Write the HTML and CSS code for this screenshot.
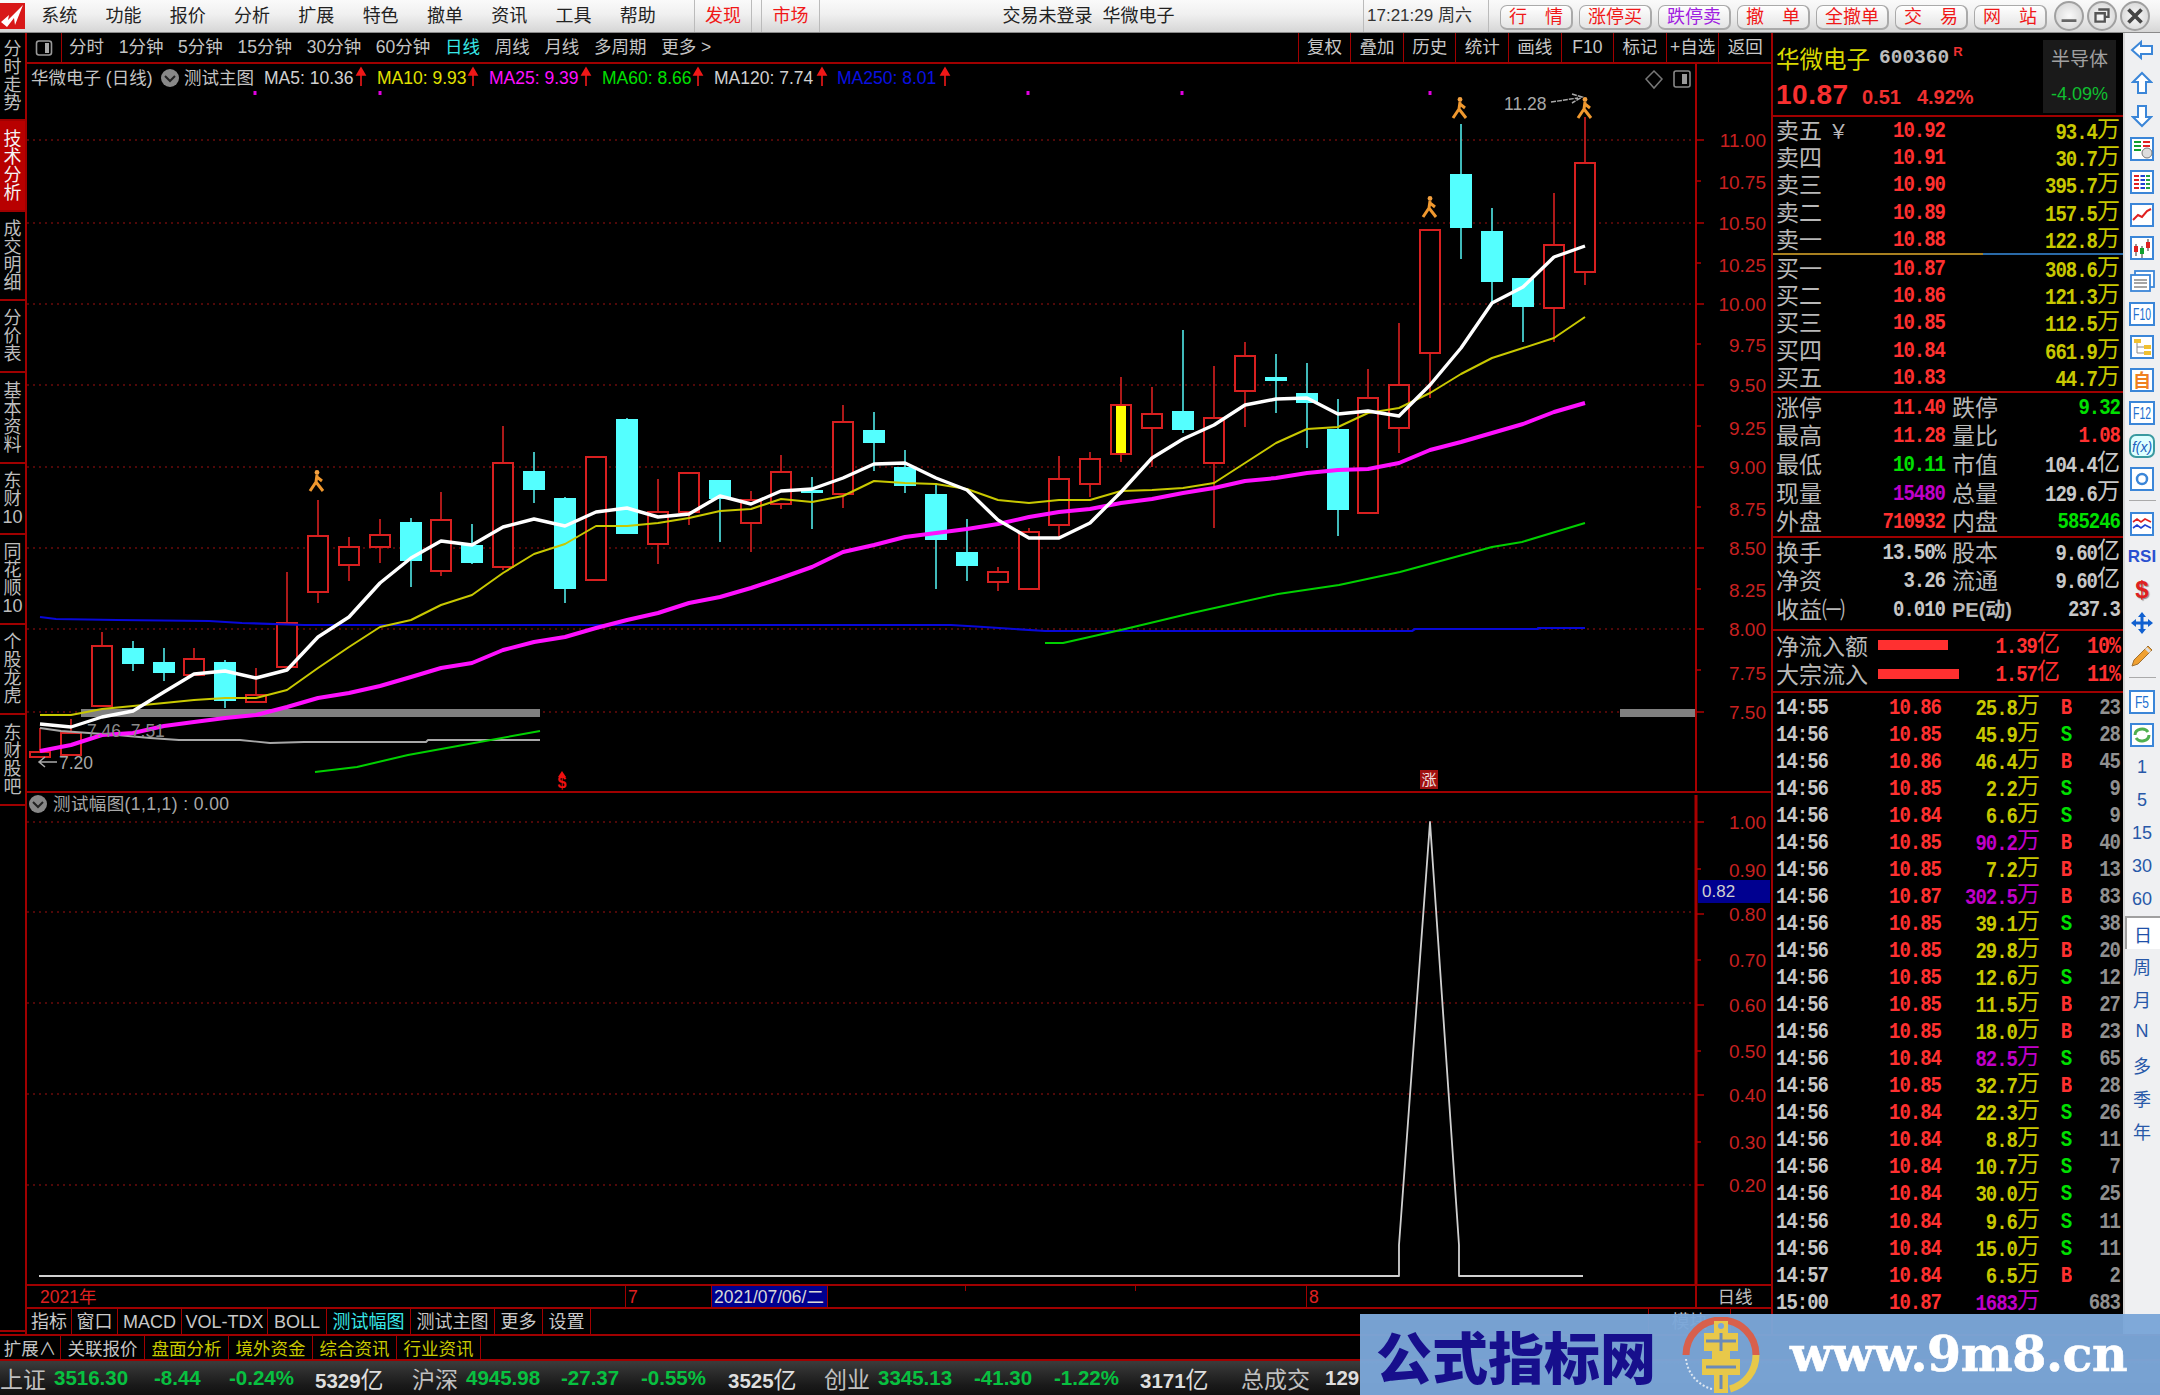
FILE: index.html
```html
<!DOCTYPE html>
<html lang="zh-CN">
<head>
<meta charset="utf-8">
<title>华微电子 600360</title>
<link rel="stylesheet" href="styles.css">
</head>
<body>
<div class="app">
  <header class="topbar">
    <div class="logo"><svg width="25" height="26" viewBox="0 0 25 26"><rect width="25" height="26" fill="#d81818"/><path d="M1 19 L9 12 L8 17 L23 2 L15 22 L14 15 L7 24 Z" fill="#fff"/></svg></div>
    <nav class="menu"><a>系统</a><a>功能</a><a>报价</a><a>分析</a><a>扩展</a><a>特色</a><a>撤单</a><a>资讯</a><a>工具</a><a>帮助</a></nav>
    <a class="hot hot-a">发现</a><a class="hot hot-b">市场</a>
    <div class="title">交易未登录&nbsp;&nbsp;华微电子</div>
    <div class="clock">17:21:29 周六</div>
    <div class="btns"><a class="btn">行&emsp;情</a><a class="btn">涨停买</a><a class="btn purple">跌停卖</a><a class="btn">撤&emsp;单</a><a class="btn">全撤单</a><a class="btn">交&emsp;易</a><a class="btn">网&emsp;站</a></div>
    <div class="winbtns">
      <span class="win"><svg width="28" height="28" viewBox="0 0 28 28"><path d="M6 19H22" stroke="#666" stroke-width="3"/></svg></span>
      <span class="win"><svg width="28" height="28" viewBox="0 0 28 28"><path d="M10 7H21V15H18M7 11H17V20H7Z" fill="none" stroke="#555" stroke-width="2.5"/></svg></span>
      <span class="win"><svg width="28" height="28" viewBox="0 0 28 28"><path d="M7 7L21 21M21 7L7 21" stroke="#444" stroke-width="4"/></svg></span>
    </div>
  </header>

  <div class="work">
    <aside class="sidetabs">
      <a class="stab h88">分<br>时<br>走<br>势</a>
      <a class="stab h91 on">技<br>术<br>分<br>析</a>
      <a class="stab h89">成<br>交<br>明<br>细</a>
      <a class="stab h72">分<br>价<br>表</a>
      <a class="stab h91">基<br>本<br>资<br>料</a>
      <a class="stab h71">东<br>财<br>10</a>
      <a class="stab h90">同<br>花<br>顺<br>10</a>
      <a class="stab h90">个<br>股<br>龙<br>虎</a>
      <a class="stab h91">东<br>财<br>股<br>吧</a>
      <div class="sidefill"></div>
    </aside>

    <main class="center">
      <div class="toolbar">
        <span class="tcell"><svg width="18" height="18" viewBox="0 0 18 18"><rect x="1.5" y="2" width="15" height="14" rx="2.5" fill="none" stroke="#999" stroke-width="1.6"/><rect x="10" y="4" width="4" height="10" fill="#aaa"/></svg></span>
        <div class="periods"><a>分时</a><a>1分钟</a><a>5分钟</a><a>15分钟</a><a>30分钟</a><a>60分钟</a><a class="cy">日线</a><a>周线</a><a>月线</a><a>多周期</a><a>更多 &gt;</a></div>
        <div class="tools-r"><a>复权</a><a>叠加</a><a>历史</a><a>统计</a><a>画线</a><a>F10</a><a>标记</a><a>+自选</a><a>返回</a></div>
      </div>

      <svg class="pane-main" width="1744" height="727" viewBox="27 64 1744 727">
        <defs>
          <symbol id="walker" viewBox="0 0 18 22"><circle cx="9" cy="2.5" r="2.4" fill="#f2a040"/><path d="M9 5L8 12L2 21M8 12L15 21M9 7L14 11" fill="none" stroke="#f0982e" stroke-width="3"/></symbol>
        </defs>
        <path class="grid" d="M27 140H1696M27 223H1696M27 304H1696M27 385H1696M27 467H1696M27 548H1696M27 629H1696M27 712H1696"/>
        <path class="dots" d="M255 91v4M380 91v4M1028 91v4M1182 91v4M1430 91v4"/>
        <rect class="band" x="81" y="709" width="459" height="8"/>
        <rect class="band" x="1620" y="709" width="76" height="8"/>

        <path class="wick-r" d="M40 728V757M71 719V755M102 632V706M194 648V675M256 668V703M287 572V667M318 500V603M349 537V581M380 519V563M441 492V576M503 426V570M658 479V564M689 472V525M751 491V552M781 455V509M843 405V508M998 567V591M1029 528V589M1059 456V537M1090 452V497M1121 377V462M1152 387V467M1214 366V528M1245 342V427M1368 369V513M1399 323V453M1430 230V398M1554 193V342M1585 117V285"/>
        <path class="wick-c" d="M133 641V671M164 648V681M225 660V708M411 518V587M472 524V564M534 452V503M565 497V603M627 418V534M720 481V542M812 477V529M874 412V471M905 450V493M936 483V589M967 519V581M1183 330V433M1276 354V413M1307 363V448M1338 399V536M1461 124V259M1492 208V305M1523 278V342"/>

        <g class="up">
          <rect x="30" y="752" width="20" height="5"/><rect x="61" y="733" width="20" height="22"/><rect x="92" y="646" width="20" height="60"/>
          <rect x="184" y="659" width="20" height="16"/><rect x="246" y="695" width="20" height="7"/><rect x="277" y="623" width="20" height="44"/>
          <rect x="308" y="536" width="20" height="56"/><rect x="339" y="547" width="20" height="18"/><rect x="370" y="535" width="20" height="12"/>
          <rect x="431" y="520" width="20" height="51"/><rect x="493" y="463" width="20" height="104"/><rect x="586" y="457" width="20" height="123"/>
          <rect x="648" y="512" width="20" height="32"/><rect x="679" y="473" width="20" height="39"/><rect x="741" y="500" width="20" height="23"/>
          <rect x="771" y="472" width="20" height="32"/><rect x="833" y="422" width="20" height="72"/><rect x="988" y="572" width="20" height="10"/>
          <rect x="1019" y="532" width="20" height="57"/><rect x="1049" y="479" width="20" height="46"/><rect x="1080" y="459" width="20" height="25"/>
          <rect x="1111" y="405" width="20" height="49"/><rect x="1142" y="414" width="20" height="14"/><rect x="1204" y="418" width="20" height="45"/>
          <rect x="1235" y="356" width="20" height="35"/><rect x="1358" y="398" width="20" height="115"/><rect x="1389" y="385" width="20" height="43"/>
          <rect x="1420" y="230" width="20" height="123"/><rect x="1544" y="245" width="20" height="63"/><rect x="1575" y="163" width="20" height="109"/>
        </g>
        <rect class="up-y" x="1116" y="406" width="10" height="47"/>
        <g class="down">
          <rect x="122" y="648" width="22" height="16"/><rect x="153" y="662" width="22" height="11"/><rect x="214" y="662" width="22" height="39"/>
          <rect x="400" y="522" width="22" height="39"/><rect x="461" y="545" width="22" height="18"/><rect x="523" y="471" width="22" height="19"/>
          <rect x="554" y="498" width="22" height="91"/><rect x="616" y="419" width="22" height="115"/><rect x="709" y="480" width="22" height="19"/>
          <rect x="801" y="490" width="22" height="3"/><rect x="863" y="430" width="22" height="13"/><rect x="894" y="467" width="22" height="19"/>
          <rect x="925" y="494" width="22" height="46"/><rect x="956" y="552" width="22" height="14"/><rect x="1172" y="411" width="22" height="19"/>
          <rect x="1265" y="377" width="22" height="4"/><rect x="1296" y="393" width="22" height="10"/><rect x="1327" y="429" width="22" height="81"/>
          <rect x="1450" y="174" width="22" height="54"/><rect x="1481" y="231" width="22" height="51"/><rect x="1512" y="278" width="22" height="29"/>
        </g>

        <polyline class="l-blue" points="40,617 56,619 117,620 209,621 242,623 304,625 951,625 984,627 1045,631 1412,631 1415,629 1538,629 1538,628 1585,628"/>
        <polyline class="l-gray" points="40,728 61,731 117,735 150,738 179,740 240,740 270,743 304,742 426,742 428,740 540,740"/>
        <polyline class="l-green" points="315,772 357,767 408,755 540,731"/>
        <polyline class="l-green" points="1045,643 1063,643 1125,629 1192,613 1278,594 1339,585 1400,572 1492,547 1522,542 1585,523"/>
        <polyline class="l-mag" points="40,751 71,745 102,735 133,733 164,726 194,722 225,718 256,715 287,707 318,698 349,693 380,686 411,677 441,668 472,663 503,650 534,642 565,637 596,628 627,620 658,613 689,603 720,597 751,588 781,578 812,567 843,552 874,545 905,537 936,533 967,529 998,524 1029,517 1059,512 1090,509 1121,503 1152,499 1183,493 1214,488 1245,481 1276,478 1307,473 1338,470 1368,469 1399,463 1430,450 1461,442 1492,433 1523,424 1554,412 1585,403"/>
        <polyline class="l-yel" points="40,715 71,715 102,709 133,706 164,703 194,700 225,698 256,698 287,690 318,668 349,647 380,627 411,620 441,605 472,595 503,573 534,554 565,544 596,526 627,526 658,523 689,518 720,511 751,509 781,499 812,502 843,496 874,481 905,483 936,484 967,489 998,500 1029,503 1059,500 1090,500 1121,491 1152,490 1183,488 1214,483 1245,463 1276,443 1307,429 1338,427 1368,413 1399,408 1430,393 1461,374 1492,358 1523,348 1554,338 1585,317"/>
        <polyline class="l-white" points="40,724 71,727 102,717 133,711 164,692 194,674 225,671 256,678 287,670 318,637 349,617 380,583 411,558 441,541 472,545 503,527 534,519 565,526 596,512 627,508 658,517 689,514 720,496 751,504 781,491 812,489 843,478 874,464 905,463 936,478 967,490 998,520 1029,538 1059,538 1090,523 1121,492 1152,458 1183,439 1214,425 1245,405 1276,399 1307,398 1338,414 1368,411 1399,416 1430,385 1461,348 1492,303 1523,287 1554,257 1585,246"/>

        <use href="#walker" x="308" y="470" width="18" height="22"/>
        <use href="#walker" x="1421" y="196" width="18" height="22"/>
        <use href="#walker" x="1451" y="97" width="18" height="22"/>
        <use href="#walker" x="1576" y="97" width="18" height="22"/>

        <text class="t-hd" x="31" y="84">华微电子 (日线)</text>
        <g><circle cx="170" cy="78" r="9" fill="#888"/><path d="M165 76l5 5 5-5" fill="none" stroke="#222" stroke-width="2"/></g>
        <text class="t-hd" x="184" y="84">测试主图</text>
        <text class="t-hd c-w" x="264" y="84">MA5: 10.36</text><path class="arr" d="M361 86V70M357 75L361 68L365 75Z"/>
        <text class="t-hd c-y" x="377" y="84">MA10: 9.93</text><path class="arr" d="M473 86V70M469 75L473 68L477 75Z"/>
        <text class="t-hd c-m" x="489" y="84">MA25: 9.39</text><path class="arr" d="M586 86V70M582 75L586 68L590 75Z"/>
        <text class="t-hd c-g" x="602" y="84">MA60: 8.66</text><path class="arr" d="M698 86V70M694 75L698 68L702 75Z"/>
        <text class="t-hd c-w" x="714" y="84">MA120: 7.74</text><path class="arr" d="M822 86V70M818 75L822 68L826 75Z"/>
        <text class="t-hd c-b" x="837" y="84">MA250: 8.01</text><path class="arr" d="M945 86V70M941 75L945 68L949 75Z"/>
        <path d="M1654 71L1662 79L1654 88L1646 79Z" fill="none" stroke="#777" stroke-width="1.5"/>
        <rect x="1674" y="71" width="16" height="16" rx="2" fill="none" stroke="#888" stroke-width="1.6"/><rect x="1682" y="74" width="5" height="10" fill="#999"/>

        <text class="t-anno" x="1504" y="110">11.28</text>
        <path d="M1551 102L1578 98M1572 94L1582 97L1572 103" fill="none" stroke="#aaa" stroke-width="1.5" stroke-dasharray="5 1"/>
        <text class="t-anno t-dim" x="87" y="737">7.46&nbsp;&nbsp;7.51</text>
        <text class="t-anno" x="59" y="769">7.20</text>
        <path d="M57 762H40M45 757L39 762L45 767" fill="none" stroke="#aaa" stroke-width="1.5"/>

        <path d="M562 771L566 777H558Z" fill="#f01010"/>
        <text class="t-dollar" x="562" y="788">$</text>
        <rect x="1420" y="770" width="18" height="19" fill="#a01010"/>
        <text class="t-zhang" x="1429" y="785">涨</text>

        <path class="axis" d="M1696 64V791"/>
        <path class="axtick" d="M1696 140H1704M1696 181H1701M1696 223H1704M1696 263H1701M1696 304H1704M1696 344H1701M1696 385H1704M1696 426H1701M1696 467H1704M1696 507H1701M1696 548H1704M1696 589H1701M1696 629H1704M1696 670H1701M1696 712H1704"/>
        <g class="ax">
          <text x="1766" y="147">11.00</text><text x="1766" y="189">10.75</text><text x="1766" y="230">10.50</text><text x="1766" y="272">10.25</text><text x="1766" y="311">10.00</text><text x="1766" y="352">9.75</text><text x="1766" y="392">9.50</text><text x="1766" y="435">9.25</text><text x="1766" y="474">9.00</text><text x="1766" y="516">8.75</text><text x="1766" y="555">8.50</text><text x="1766" y="597">8.25</text><text x="1766" y="636">8.00</text><text x="1766" y="680">7.75</text><text x="1766" y="719">7.50</text>
        </g>
      </svg>

      <svg class="pane-sub" width="1744" height="491" viewBox="27 793 1744 491">
        <path class="grid" d="M27 822H1696M27 912H1696M27 1003H1696M27 1094H1696M27 1185H1696"/>
        <g><circle cx="38" cy="804" r="9" fill="#888"/><path d="M33 802l5 5 5-5" fill="none" stroke="#222" stroke-width="2"/></g>
        <text class="t-hd c-s" x="53" y="810">测试幅图(1,1,1) : 0.00</text>
        <polyline class="l-spike" points="39,1276 1399,1276 1399,1245 1430,822 1459,1245 1459,1276 1583,1276"/>
        <path class="axis thick" d="M1696 795V1284"/>
        <path class="axtick" d="M1696 822H1704M1696 869H1701M1696 914H1704M1696 960H1701M1696 1005H1704M1696 1051H1701M1696 1095H1704M1696 1142H1701M1696 1185H1704"/>
        <g class="ax">
          <text x="1766" y="829">1.00</text><text x="1766" y="877">0.90</text><text x="1766" y="921">0.80</text><text x="1766" y="967">0.70</text><text x="1766" y="1012">0.60</text><text x="1766" y="1058">0.50</text><text x="1766" y="1102">0.40</text><text x="1766" y="1149">0.30</text><text x="1766" y="1192">0.20</text>
        </g>
        <rect x="1698" y="880" width="72" height="23" fill="#000090"/>
        <text class="t-val" x="1702" y="897">0.82</text>
      </svg>

      <div class="datebar">
        <span class="d1">2021年</span><span class="d2">7</span><span class="d3">2021/07/06/二</span><span class="d4"></span><span class="d5">8</span><span class="d6">日线</span>
        <i class="tick t1"></i><i class="tick t2"></i>
      </div>

      <div class="subtabs"><a class="c45">指标</a><a class="c46">窗口</a><a class="c64">MACD</a><a class="c86">VOL-TDX</a><a class="c59">BOLL</a><a class="c84 cy">测试幅图</a><a class="c84">测试主图</a><a class="c48">更多</a><a class="c48">设置</a><a class="ghost">模块</a></div>
    </main>

    <section class="quote">
      <div class="q-head">
        <div class="q-id">
          <div class="q-name"><span class="nm">华微电子</span><span class="code">600360</span><sup>R</sup></div>
          <div class="q-price"><b>10.87</b><span>0.51</span><span class="pct">4.92%</span></div>
        </div>
        <div class="sector"><span>半导体</span><em>-4.09%</em></div>
      </div>
      <div class="book">
        <div class="o"><span>卖五 <small>￥</small></span><b class="r">10.92</b><b class="y">93.4<i>万</i></b></div>
        <div class="o"><span>卖四</span><b class="r">10.91</b><b class="y">30.7<i>万</i></b></div>
        <div class="o"><span>卖三</span><b class="r">10.90</b><b class="y">395.7<i>万</i></b></div>
        <div class="o"><span>卖二</span><b class="r">10.89</b><b class="y">157.5<i>万</i></b></div>
        <div class="o"><span>卖一</span><b class="r">10.88</b><b class="y">122.8<i>万</i></b></div>
      </div>
      <div class="split"></div>
      <div class="book">
        <div class="o"><span>买一</span><b class="r">10.87</b><b class="y">308.6<i>万</i></b></div>
        <div class="o"><span>买二</span><b class="r">10.86</b><b class="y">121.3<i>万</i></b></div>
        <div class="o"><span>买三</span><b class="r">10.85</b><b class="y">112.5<i>万</i></b></div>
        <div class="o"><span>买四</span><b class="r">10.84</b><b class="y">661.9<i>万</i></b></div>
        <div class="o"><span>买五</span><b class="r">10.83</b><b class="y">44.7<i>万</i></b></div>
      </div>
      <div class="rule"></div>
      <div class="stats">
        <div class="s"><span>涨停</span><b class="r">11.40</b><span class="l2">跌停</span><b class="g">9.32</b></div>
        <div class="s"><span>最高</span><b class="r">11.28</b><span class="l2">量比</span><b class="r">1.08</b></div>
        <div class="s"><span>最低</span><b class="g">10.11</b><span class="l2">市值</span><b class="w">104.4<i>亿</i></b></div>
        <div class="s"><span>现量</span><b class="p">15480</b><span class="l2">总量</span><b class="w">129.6<i>万</i></b></div>
        <div class="s"><span>外盘</span><b class="r">710932</b><span class="l2">内盘</span><b class="g">585246</b></div>
      </div>
      <div class="rule"></div>
      <div class="stats fin">
        <div class="s"><span>换手</span><b class="w">13.50%</b><span class="l2">股本</span><b class="w">9.60<i>亿</i></b></div>
        <div class="s"><span>净资</span><b class="w">3.26</b><span class="l2">流通</span><b class="w">9.60<i>亿</i></b></div>
        <div class="s"><span>收益㈠</span><b class="w">0.010</b><span class="l2 pe">PE(动)</span><b class="w">237.3</b></div>
      </div>
      <div class="rule"></div>
      <div class="flows">
        <div class="f"><span>净流入额</span><u style="width:70px"></u><b class="r">1.39<i>亿</i></b><b class="r pc">10%</b></div>
        <div class="f"><span>大宗流入</span><u style="width:81px"></u><b class="r">1.57<i>亿</i></b><b class="r pc">11%</b></div>
      </div>
      <div class="rule"></div>
      <div class="ticks">
        <div class="k"><b>14:55</b><b class="r">10.86</b><b class="y">25.8<i>万</i></b><b class="r bs">B</b><b class="c">23</b></div>
        <div class="k"><b>14:56</b><b class="r">10.85</b><b class="y">45.9<i>万</i></b><b class="g bs">S</b><b class="c">28</b></div>
        <div class="k"><b>14:56</b><b class="r">10.86</b><b class="y">46.4<i>万</i></b><b class="r bs">B</b><b class="c">45</b></div>
        <div class="k"><b>14:56</b><b class="r">10.85</b><b class="y">2.2<i>万</i></b><b class="g bs">S</b><b class="c">9</b></div>
        <div class="k"><b>14:56</b><b class="r">10.84</b><b class="y">6.6<i>万</i></b><b class="g bs">S</b><b class="c">9</b></div>
        <div class="k"><b>14:56</b><b class="r">10.85</b><b class="p">90.2<i>万</i></b><b class="r bs">B</b><b class="c">40</b></div>
        <div class="k"><b>14:56</b><b class="r">10.85</b><b class="y">7.2<i>万</i></b><b class="r bs">B</b><b class="c">13</b></div>
        <div class="k"><b>14:56</b><b class="r">10.87</b><b class="p">302.5<i>万</i></b><b class="r bs">B</b><b class="c">83</b></div>
        <div class="k"><b>14:56</b><b class="r">10.85</b><b class="y">39.1<i>万</i></b><b class="g bs">S</b><b class="c">38</b></div>
        <div class="k"><b>14:56</b><b class="r">10.85</b><b class="y">29.8<i>万</i></b><b class="r bs">B</b><b class="c">20</b></div>
        <div class="k"><b>14:56</b><b class="r">10.85</b><b class="y">12.6<i>万</i></b><b class="g bs">S</b><b class="c">12</b></div>
        <div class="k"><b>14:56</b><b class="r">10.85</b><b class="y">11.5<i>万</i></b><b class="r bs">B</b><b class="c">27</b></div>
        <div class="k"><b>14:56</b><b class="r">10.85</b><b class="y">18.0<i>万</i></b><b class="r bs">B</b><b class="c">23</b></div>
        <div class="k"><b>14:56</b><b class="r">10.84</b><b class="p">82.5<i>万</i></b><b class="g bs">S</b><b class="c">65</b></div>
        <div class="k"><b>14:56</b><b class="r">10.85</b><b class="y">32.7<i>万</i></b><b class="r bs">B</b><b class="c">28</b></div>
        <div class="k"><b>14:56</b><b class="r">10.84</b><b class="y">22.3<i>万</i></b><b class="g bs">S</b><b class="c">26</b></div>
        <div class="k"><b>14:56</b><b class="r">10.84</b><b class="y">8.8<i>万</i></b><b class="g bs">S</b><b class="c">11</b></div>
        <div class="k"><b>14:56</b><b class="r">10.84</b><b class="y">10.7<i>万</i></b><b class="g bs">S</b><b class="c">7</b></div>
        <div class="k"><b>14:56</b><b class="r">10.84</b><b class="y">30.0<i>万</i></b><b class="g bs">S</b><b class="c">25</b></div>
        <div class="k"><b>14:56</b><b class="r">10.84</b><b class="y">9.6<i>万</i></b><b class="g bs">S</b><b class="c">11</b></div>
        <div class="k"><b>14:56</b><b class="r">10.84</b><b class="y">15.0<i>万</i></b><b class="g bs">S</b><b class="c">11</b></div>
        <div class="k"><b>14:57</b><b class="r">10.84</b><b class="y">6.5<i>万</i></b><b class="r bs">B</b><b class="c">2</b></div>
        <div class="k"><b>15:00</b><b class="r">10.87</b><b class="p">1683<i>万</i></b><b class="bs"></b><b class="c">683</b></div>
      </div>
    </section>

    <aside class="tools">
      <a class="ti"><svg width="24" height="22" viewBox="0 0 24 22"><path d="M2 11L11 3V7H22V15H11V19Z" fill="#fff" stroke="#3b86d8" stroke-width="2"/></svg></a>
      <a class="ti"><svg width="22" height="24" viewBox="0 0 22 24"><path d="M11 2L20 11H15V22H7V11H2Z" fill="#fff" stroke="#3b86d8" stroke-width="2"/></svg></a>
      <a class="ti"><svg width="22" height="24" viewBox="0 0 22 24"><path d="M11 22L20 13H15V2H7V13H2Z" fill="#fff" stroke="#3b86d8" stroke-width="2"/></svg></a>
      <a class="ti"><svg width="24" height="24" viewBox="0 0 24 24"><rect x="1" y="1" width="22" height="22" fill="#fff" stroke="#3b86d8" stroke-width="2"/><path d="M4 5H11M4 9H11M4 13H11" stroke="#10a030" stroke-width="2"/><path d="M13 5H20M13 9H20" stroke="#e02020" stroke-width="2"/><circle cx="17" cy="16" r="5" fill="#ddd" stroke="#777"/></svg></a>
      <a class="ti"><svg width="24" height="24" viewBox="0 0 24 24"><rect x="1" y="1" width="22" height="22" fill="#fff" stroke="#3b86d8" stroke-width="2"/><path d="M4 6H9M4 10H9M4 14H9M4 18H9" stroke="#e02020" stroke-width="2"/><path d="M10.500 6H15M10.500 10H15M10.500 14H15M10.500 18H15" stroke="#2040d0" stroke-width="2"/><path d="M16 6H20M16 10H20M16 14H20M16 18H20" stroke="#20a040" stroke-width="2"/></svg></a>
      <a class="ti"><svg width="24" height="24" viewBox="0 0 24 24"><rect x="1" y="1" width="22" height="22" fill="#fff" stroke="#3b86d8" stroke-width="2"/><path d="M3 17L8 12L12 14L17 8L21 6" fill="none" stroke="#e02020" stroke-width="2"/></svg></a>
      <a class="ti"><svg width="24" height="24" viewBox="0 0 24 24"><rect x="1" y="1" width="22" height="22" fill="#fff" stroke="#3b86d8" stroke-width="2"/><path d="M6 8V20M12 10V22M18 3V15" stroke="#555" stroke-width="1.2"/><rect x="4" y="10" width="4" height="6" fill="#e02020"/><rect x="10" y="12" width="4" height="6" fill="#10a030"/><rect x="16" y="6" width="4" height="6" fill="#e02020"/></svg></a>
      <a class="ti"><svg width="26" height="24" viewBox="0 0 26 24"><rect x="6" y="2" width="19" height="16" fill="#fff" stroke="#3b86d8" stroke-width="1.8"/><rect x="2" y="6" width="19" height="16" fill="#fff" stroke="#3b86d8" stroke-width="1.8"/><path d="M5 11H18M5 14H18M5 18H18" stroke="#888" stroke-width="1.6"/></svg></a>
      <a class="ti"><svg width="26" height="24" viewBox="0 0 26 24"><rect x="1" y="1" width="24" height="22" fill="#fff" stroke="#3b86d8" stroke-width="2"/><text class="ft" x="4" y="18" textLength="18" lengthAdjust="spacingAndGlyphs">F10</text></svg></a>
      <a class="ti"><svg width="24" height="24" viewBox="0 0 24 24"><rect x="1" y="1" width="22" height="22" fill="#fff" stroke="#3b86d8" stroke-width="2"/><rect x="4" y="4" width="7" height="4" fill="#f0c030"/><rect x="14" y="10" width="7" height="4" fill="#f0c030"/><rect x="14" y="16" width="7" height="4" fill="#f0c030"/><path d="M7 8V18H14M7 12H14" fill="none" stroke="#888"/></svg></a>
      <a class="ti"><svg width="24" height="24" viewBox="0 0 24 24"><rect x="1" y="1" width="22" height="22" fill="#fff" stroke="#3b86d8" stroke-width="2"/><text class="fz" x="12" y="19">自</text></svg></a>
      <a class="ti"><svg width="26" height="24" viewBox="0 0 26 24"><rect x="1" y="1" width="24" height="22" fill="#fff" stroke="#3b86d8" stroke-width="2"/><text class="ft" x="4" y="18" textLength="18" lengthAdjust="spacingAndGlyphs">F12</text></svg></a>
      <a class="ti"><svg width="26" height="24" viewBox="0 0 26 24"><rect x="1" y="1" width="24" height="22" rx="6" fill="#dff" stroke="#3a9aa0" stroke-width="2"/><text class="fx" x="13" y="18">f(x)</text></svg></a>
      <a class="ti"><svg width="24" height="24" viewBox="0 0 24 24"><rect x="1" y="1" width="22" height="22" fill="#fff" stroke="#3b86d8" stroke-width="2"/><circle cx="12" cy="12" r="5" fill="none" stroke="#3b86d8" stroke-width="2.5"/></svg></a>
      <div class="tsep s1"></div>
      <a class="ti"><svg width="24" height="24" viewBox="0 0 24 24"><rect x="1" y="1" width="22" height="22" fill="#fff" stroke="#3b86d8" stroke-width="2"/><path d="M3 10L7 7L11 10L15 7L21 10" fill="none" stroke="#e02020" stroke-width="1.6"/><path d="M3 16L7 13L11 16L15 13L21 16" fill="none" stroke="#2040d0" stroke-width="1.6"/></svg></a>
      <a class="ti"><span class="rsi">RSI</span></a>
      <a class="ti"><span class="usd">$</span></a>
      <a class="ti"><svg width="24" height="24" viewBox="0 0 24 24"><path d="M12 1L16 6H13.500V10.500H18V8L23 12L18 16V13.500H13.500V18H16L12 23L8 18H10.500V13.500H6V16L1 12L6 8V10.500H10.500V6H8Z" fill="#1060d0"/></svg></a>
      <a class="ti"><svg width="24" height="24" viewBox="0 0 24 24"><path d="M18 2L22 6L8 20L2 22L4 16Z" fill="#f0a030" stroke="#a07030"/><path d="M16 4L20 8" stroke="#ddd" stroke-width="3"/></svg></a>
      <div class="tsep s2"></div>
      <a class="ti"><svg width="26" height="24" viewBox="0 0 26 24"><rect x="1" y="1" width="24" height="22" fill="#fff" stroke="#3b86d8" stroke-width="2"/><text class="ft" x="6" y="18" textLength="14" lengthAdjust="spacingAndGlyphs">F5</text></svg></a>
      <a class="ti"><svg width="24" height="24" viewBox="0 0 24 24"><rect x="1" y="1" width="22" height="22" fill="#fff" stroke="#3b86d8" stroke-width="2"/><path d="M5 12A7 6 0 0 1 18 9M19 12A7 6 0 0 1 6 15" fill="none" stroke="#50b050" stroke-width="3"/></svg></a>
      <a class="ti num">1</a><a class="ti num">5</a><a class="ti num">15</a><a class="ti num">30</a><a class="ti num">60</a>
      <a class="ti num on">日</a><a class="ti num">周</a><a class="ti num">月</a><a class="ti num">N</a><a class="ti num">多</a><a class="ti num">季</a><a class="ti num">年</a>
    </aside>
  </div>

  <div class="extbar"><a>扩展∧</a><a>关联报价</a><a class="yl">盘面分析</a><a class="yl">境外资金</a><a class="yl">综合资讯</a><a class="yl">行业资讯</a></div>

  <footer class="status">
    <span class="sn">上证</span><b class="sp w100">3516.30</b><b class="sp w75">-8.44</b><b class="sp w86">-0.24%</b><b class="sa w97">5329<i>亿</i></b>
    <span class="sn">沪深</span><b class="sp w95">4945.98</b><b class="sp w80">-27.37</b><b class="sp w87">-0.55%</b><b class="sa w96">3525<i>亿</i></b>
    <span class="sn">创业</span><b class="sp w96">3345.13</b><b class="sp w80">-41.30</b><b class="sp w86">-1.22%</b><b class="sa w101">3171<i>亿</i></b>
    <span class="sn w84">总成交</span><b class="sa">129</b>
  </footer>

  <div class="watermark">
    <span class="wm-cn">公式指标网</span>
    <svg class="wm-logo" width="78" height="76" viewBox="0 0 78 76">
      <path d="M4 38A35 35 0 0 1 74 38" fill="none" stroke="#d8604c" stroke-width="7"/>
      <path d="M74 38A35 35 0 0 1 48 72" fill="none" stroke="#e8c84a" stroke-width="7"/>
      <path d="M4 42A35 35 0 0 0 30 72" fill="none" stroke="#dfe8f2" stroke-width="2" stroke-dasharray="2 2"/>
      <path d="M32 4H46V16H56V34H48V42H58V58H46V76H32V58H20V42H30V34H22V16H32Z" fill="#e8c84a"/>
      <path d="M24 24H54M24 50H54M39 16V34M39 58V72" stroke="#6a8ab8" stroke-width="3"/>
      <circle cx="39" cy="9" r="3" fill="#7ba6d8"/>
    </svg>
    <span class="wm-url">www.9m8.cn</span>
  </div>
</div>
</body>
</html>
```

FILE: styles.css
```css
* { box-sizing: border-box; }
html, body { margin: 0; padding: 0; background: #000; }
body { font-family: "Liberation Sans", "Noto Sans CJK SC", sans-serif; color: #c0c0c0; overflow: hidden; }
a { display: block; }
.app { position: relative; width: 2160px; height: 1395px; display: flex; flex-direction: column; overflow: hidden; background: #000; }

/* title bar */
.topbar { height: 33px; display: flex; align-items: stretch; background: linear-gradient(#fafafa, #f0f0f0 45%, #d6d6d6); border-bottom: 1px solid #8a8a8a; color: #222; font-size: 18px; line-height: 32px; flex: none; }
.logo { width: 27px; padding: 3px 0 0 0; }
.menu { display: flex; width: 643px; }
.menu a { width: 64.3px; text-align: center; }
.hot { color: #f01818; text-align: center; border-left: 1px solid #bbb; border-right: 1px solid #bbb; }
.hot-a { width: 58px; margin-left: 24px; }
.hot-b { width: 59px; margin-left: 9px; }
.title { width: 543px; text-align: center; padding-right: 6px; }
.clock { width: 126px; border-left: 1px solid #bbb; border-right: 1px solid #bbb; padding-left: 3px; color: #333; font-size: 17px; white-space: nowrap; }
.btns { display: flex; gap: 6px; margin-left: 11px; padding-top: 5px; }
.btn { width: 73px; height: 25px; line-height: 22px; border: 1.5px solid #aaa; border-right-width: 2.5px; border-bottom-width: 2.5px; border-radius: 7px; color: #f01818; text-align: center; background: linear-gradient(#fff, #e4e4e4); font-size: 18px; }
.purple { color: #a020e0; }
.winbtns { display: flex; gap: 3px; margin-left: 7px; padding-top: 1px; }
.win { width: 30px; height: 30px; border: 2px solid #a0a0a0; border-radius: 50%; background: radial-gradient(#fafafa, #d0d0d0); overflow: hidden; display: flex; align-items: center; justify-content: center; }

/* work area */
.work { display: flex; height: 1301px; flex: none; }
.sidetabs { width: 27px; flex: none; display: flex; flex-direction: column; border-right: 2px solid #a00000; }
.stab { text-align: center; font-size: 18px; line-height: 18px; border-bottom: 2px solid #a00000; display: flex; align-items: center; justify-content: center; color: #bdbdbd; }
.stab.on { background: #b80000; color: #f4f4f4; }
.h88 { height: 88px; } .h91 { height: 91px; } .h89 { height: 89px; } .h72 { height: 72px; } .h71 { height: 71px; } .h90 { height: 90px; }
.sidefill { flex: 1; border-bottom: 2px solid #a00000; margin-bottom: 2px; }

.center { width: 1744px; flex: none; display: flex; flex-direction: column; }
.toolbar { height: 31px; display: flex; border-bottom: 2px solid #a00000; font-size: 17.5px; line-height: 29px; flex: none; }
.tcell { width: 35px; display: flex; align-items: center; justify-content: center; border-right: 1px solid #a00000; }
.periods { display: flex; gap: 14.700px; padding-left: 7px; white-space: nowrap; color: #c4c4c4; }
.cy { color: #38e8e8; }
.tools-r { display: flex; margin-left: auto; }
.tools-r a { width: 52.600px; border-left: 1px solid #a00000; text-align: center; color: #c8c8c8; white-space: nowrap; }

.pane-main, .pane-sub { display: block; flex: none; }
.pane-sub { border-top: 2px solid #a00000; box-sizing: content-box; height: 491px; }
.grid { stroke: #a01010; stroke-width: 1.2; stroke-dasharray: 2 4; fill: none; }
.dots { stroke: #e000e0; stroke-width: 3; fill: none; }
.band { fill: #808080; }
.wick-r { stroke: #d82020; stroke-width: 1.6; fill: none; }
.wick-c { stroke: #50e8e8; stroke-width: 1.6; fill: none; }
.up rect { fill: #000; stroke: #d82020; stroke-width: 2; }
.up-y { fill: #ffff00; }
.down rect { fill: #54ffff; }
.l-blue, .l-gray, .l-green, .l-mag, .l-yel, .l-white, .l-spike { fill: none; stroke-linejoin: round; }
.l-blue { stroke: #0808d8; stroke-width: 2.2; }
.l-gray { stroke: #a8a8a8; stroke-width: 1.8; }
.l-green { stroke: #00d000; stroke-width: 2; }
.l-mag { stroke: #ff10ff; stroke-width: 4; }
.l-yel { stroke: #c8c800; stroke-width: 2; }
.l-white { stroke: #fff; stroke-width: 3.4; }
.l-spike { stroke: #d0d0d0; stroke-width: 1.8; }
.t-hd { font-size: 17.5px; fill: #c4c4c4; }
.c-w { fill: #d0d0d0; } .c-y { fill: #e0e000; } .c-m { fill: #ff10ff; } .c-g { fill: #00e000; } .c-b { fill: #0a10e0; } .c-s { fill: #a8a8a8; letter-spacing: .4px; }
.arr { stroke: #f01818; stroke-width: 1.6; fill: #f01818; }
.t-anno { font-size: 17.5px; fill: #a8a8a8; }
.t-dim { fill: #8a8a8a; }
.t-dollar { font-size: 16px; font-weight: bold; fill: #f01010; text-anchor: middle; }
.t-zhang { font-size: 15px; fill: #f0e0e0; text-anchor: middle; }
.axis { stroke: #a80000; stroke-width: 2; fill: none; }
.axis.thick { stroke-width: 3; }
.axtick { stroke: #b00000; stroke-width: 1.6; fill: none; }
.ax text { font-size: 19px; fill: #c82020; text-anchor: end; }
.t-val { font-size: 17px; fill: #d0d0d0; }

.datebar { position: relative; height: 25px; display: flex; border-top: 2px solid #a00000; border-bottom: 2px solid #a00000; font-size: 17.5px; line-height: 23px; flex: none; color: #e02020; white-space: nowrap; }
.datebar span { display: block; }
.d1 { width: 598px; padding-left: 13px; }
.d2 { width: 86px; border-left: 1px solid #a00000; padding-left: 2px; }
.d3 { width: 117px; background: #000090; color: #d8d8d8; border-left: 1px solid #a00000; border-right: 1px solid #a00000; padding-left: 2px; }
.d4 { width: 478px; }
.d5 { width: 389px; border-left: 1px solid #a00000; padding-left: 2px; }
.d6 { flex: 1; border-left: 2px solid #a00000; color: #c0c0c0; text-align: center; padding-left: 2px; }
.tick { position: absolute; top: 0; width: 1px; height: 5px; background: #a00000; }
.t1 { left: 938px; } .t2 { left: 1108px; }

.subtabs { height: 25px; display: flex; font-size: 18px; line-height: 26px; flex: none; white-space: nowrap; }
.subtabs a { border-right: 1.5px solid #a00000; text-align: center; color: #c8c8c8; }
.subtabs a.cy { color: #38e8e8; }
.c45 { width: 45px; } .c46 { width: 46px; } .c64 { width: 64px; } .c86 { width: 86px; } .c59 { width: 59px; } .c84 { width: 84px; } .c48 { width: 48px; }
.subtabs .ghost { margin-left: 1057px; border-left: 1.5px solid #a00000; width: 83px; }

/* quote panel */
.quote { width: 352px; flex: none; border-left: 2px solid #a00000; overflow: hidden; font-size: 23px; color: #b8b8b8; }
.quote b { font-family: "Liberation Mono", "Noto Sans CJK SC", monospace; font-size: 19px; font-weight: bold; letter-spacing: -1px; white-space: nowrap; transform: scaleY(1.18); }
.quote i { display: inline-block; font: normal 23px/1 "Noto Sans CJK SC", sans-serif; letter-spacing: 0; transform: scaleY(.85); }
.r { color: #ff3030; } .y { color: #c8c800; } .g { color: #00e000; } .p { color: #c000c8; } .w { color: #c8c8c8; }
.q-head { height: 84px; display: flex; justify-content: space-between; border-bottom: 2px solid #a00000; }
.q-id { padding-left: 3px; }
.q-name { height: 46px; display: flex; align-items: center; padding-top: 4px; }
.nm { color: #d8d800; font-size: 23.5px; }
.q-name .code { color: #bcbcbc; font: bold 19.500px "Liberation Mono", monospace; margin-left: 9px; }
.q-name sup { color: #f03030; font: bold 13px "Liberation Sans", sans-serif; margin-left: 4px; margin-top: -14px; }
.q-price { display: flex; align-items: baseline; height: 36px; color: #f03030; font-size: 20px; font-weight: bold; }
.quote .q-price b { font-family: "Liberation Sans", sans-serif; font-size: 28px; letter-spacing: .5px; color: #f83030; width: 86px; transform: none; }
.q-price .pct { margin-left: 16px; }
.sector { width: 73px; height: 73px; margin: 7px 7px 0 0; background: #1a1a1a; display: flex; flex-direction: column; align-items: center; justify-content: center; gap: 12px; font-size: 19px; color: #a0a0a0; line-height: 22px; }
.sector em { font-style: normal; color: #10c030; font-size: 18px; }
.book { display: flex; flex-direction: column; }
.o { height: 27.200px; line-height: 28px; display: grid; grid-template-columns: 97px 72px 1fr; padding: 0 3px; }
.o span { white-space: nowrap; }
.o small { font-size: 20px; color: #b8b8b8; }
.o b:nth-of-type(1), .s b:nth-of-type(1) { text-align: right; }
.o b:nth-of-type(2) { text-align: right; }
.split { height: 2px; background: linear-gradient(90deg, #a88020 0 60%, #2a6aa8 60%); }
.rule { height: 2px; background: #a00000; }
.s { height: 28.600px; line-height: 31px; display: grid; grid-template-columns: 97px 72px 73px 1fr; padding: 0 3px; }
.s span { white-space: nowrap; }
.s .l2 { padding-left: 7px; }
.s b:nth-of-type(2) { text-align: right; }
.s .pe { font: bold 20px "Liberation Sans", "Noto Sans CJK SC", sans-serif; color: #b8b8b8; line-height: 31px; }
.fin { padding-bottom: 5px; }
.flows { padding-bottom: 3px; }
.f { height: 28.500px; line-height: 32px; display: grid; grid-template-columns: 102px 92px 90px 1fr; padding: 0 3px; align-items: center; }
.f span { white-space: nowrap; }
.f u { display: block; height: 10px; margin-bottom: 3px; background: #ff3030; text-decoration: none; }
.f b { text-align: right; }
.f .pc { font-size: 20px; }
.k { height: 27.050px; line-height: 31px; display: grid; grid-template-columns: 113px 53px 98px 42px 38px; padding-left: 3px; }
.k b:nth-child(1) { color: #c8c8c8; }
.k b:nth-child(3) { text-align: right; }
.bs { text-align: center; padding-left: 10px; }
.c { text-align: right; color: #909090; }

/* right tool rail */
.tools { flex: 1; background: #eff0f2; border-left: 2px solid #d8d8d8; display: flex; flex-direction: column; }
.ti { height: 33px; flex: none; display: flex; align-items: center; justify-content: center; padding-right: 1px; }
.num { font-size: 18px; color: #2858a8; }
.num.on { background: #fff; border-top: 2px solid #a0a0a0; border-left: 2px solid #a0a0a0; color: #2050a8; }
.tsep { height: 1px; background: #aaa; margin: 5px 4px 6px; flex: none; }
.tsep.s2 { margin-bottom: 7px; }
.ft { font-size: 17px; fill: #2070d0; font-family: "Liberation Sans", sans-serif; }
.fz { font-size: 18px; font-weight: bold; fill: #f08020; text-anchor: middle; }
.fx { font-size: 14px; fill: #2060c0; text-anchor: middle; font-style: italic; }
.rsi { font: bold 17px "Liberation Sans", sans-serif; color: #2a50d0; }
.usd { font: bold 24px "Liberation Sans", sans-serif; color: #e02020; text-shadow: 1px 1px 1px #888; }

/* bottom */
.extbar { height: 27px; display: flex; border-top: 2px solid #a00000; border-bottom: 2px solid #a00000; font-size: 17.5px; line-height: 27px; flex: none; white-space: nowrap; }
.extbar a { width: 84px; border-right: 1.5px solid #a00000; text-align: center; color: #c4c4c4; }
.extbar a:first-child { width: 61px; }
.extbar a.yl { color: #c8c800; }
.status { height: 34px; display: flex; align-items: center; background: linear-gradient(#3c3c3c, #1a1a1a 70%, #101010); flex: none; white-space: nowrap; color: #bdbdbd; }
.status b { display: block; font-size: 20.500px; font-weight: bold; }
.status i { font: normal 23px "Noto Sans CJK SC", sans-serif; }
.sn { width: 54px; font-size: 23px; color: #c0c0c0; }
.sp { color: #08c040; }
.sa { color: #dedede; }
.w75 { width: 75px; } .w80 { width: 80px; } .w84 { width: 84px; } .w86 { width: 86px; } .w87 { width: 87px; } .w95 { width: 95px; } .w96 { width: 96px; } .w97 { width: 97px; } .w100 { width: 100px; } .w101 { width: 101px; }
.sn.w84 { width: 84px; }

/* watermark laid over the corner */
.watermark { position: absolute; left: 1360px; top: 1314px; width: 800px; height: 81px; background: rgba(123, 166, 216, .97); display: flex; align-items: center; padding-left: 16px; }
.wm-cn { width: 306px; font: 900 56px/1 "Noto Sans CJK SC", sans-serif; color: #170f8c; white-space: nowrap; }
.wm-logo { flex: none; }
.wm-url { margin-left: 30px; font: bold 49px/1 "DejaVu Serif", serif; color: #fff; white-space: nowrap; letter-spacing: -.4px; -webkit-text-stroke: .6px #fff; }
```
